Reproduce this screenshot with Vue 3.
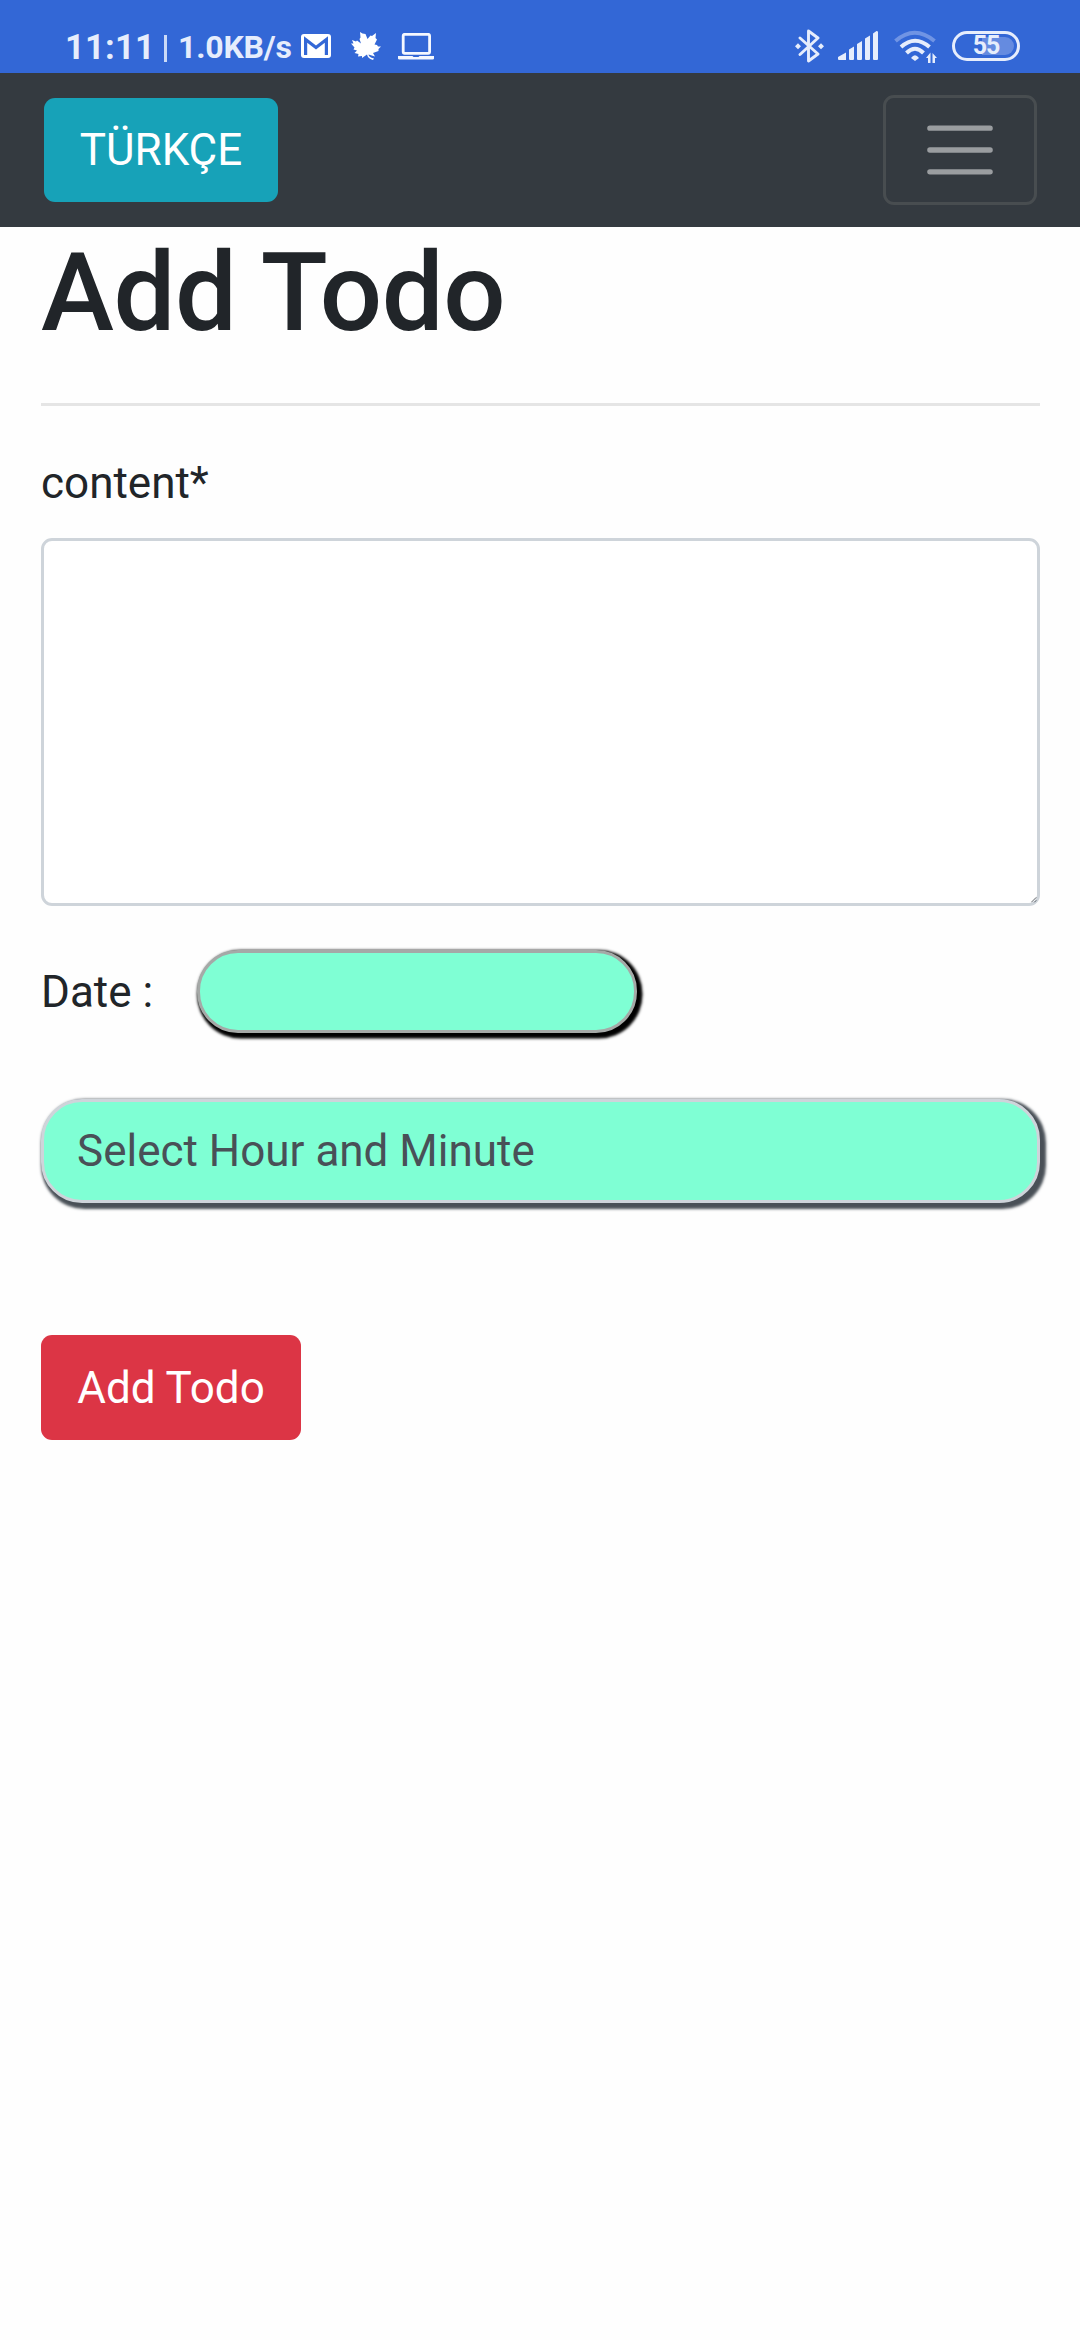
<script setup>
import { ref } from 'vue'

const content = ref('')
const date = ref('')
</script>

<template>
  <div class="screen">
    <header class="status">
      <div class="status-left">
        <span class="clock">11:11</span>
        <span class="divider"></span>
        <span class="speed">1.0KB/s</span>
        <svg class="mail" width="30" height="24" viewBox="0 0 30 24">
          <rect width="30" height="24" rx="3" fill="#fff" />
          <path d="M4.600 21V5.500L15 13.500L25.400 5.500V21" fill="none" stroke="#3367d6" stroke-width="3.200" />
        </svg>
        <svg class="leaf" width="30" height="28" viewBox="0 0 30 28">
          <path fill="#fff" d="M9 0L11.500 1.500L14.500 2L16.500 7L19.500 3.500L21 4L25 1L24.500 6L26 7.500L23.500 12.500L26 13L27 14.500L30 14.500L27.500 17L27.500 19L22 21L24 24.500L17.500 22.500C17.500 24 19 25.500 23 26.500L22 28C18 27 16.500 25 16 22.500L11 26L11 24L7 24.500L7.500 22L3.500 21L6 18.500L2.500 17.500L3.500 15.500L0 11.500L2.500 11.500L1 8L5 9.500L6 8.500L10 11.500L8.500 7L9.500 5.500Z" />
        </svg>
        <svg class="laptop" width="36" height="28" viewBox="0 0 36 28">
          <rect x="5.200" y="1.300" width="26.400" height="19" rx="1.500" fill="none" stroke="#f5f8ff" stroke-width="2.800" />
          <path d="M0 23H14.500L15.500 24H20.500L21.500 23H36V25.500Q36 26.500 34.500 26.500H1.500Q0 26.500 0 25.500Z" fill="#f5f8ff" />
        </svg>
      </div>
      <div class="status-right">
        <svg class="bluetooth" width="30" height="34" viewBox="0 0 30 34">
          <path d="M5 9L23 25L13.500 32V2L23 9L5 25.500" fill="none" stroke="#e6edfc" stroke-width="2.900" stroke-linejoin="round" stroke-linecap="round" />
          <path d="M3 14.300L6 17.300L3 20.300L0 17.300ZM26 14.300L29 17.300L26 20.300L23 17.300Z" fill="#e6edfc" />
        </svg>
        <svg class="signal" width="40" height="30" viewBox="0 0 40 30">
          <path fill="#e6edfc" d="M0 26L8 21.500V29H1Q0 29 0 28ZM11 18.500L16 15.500V28Q16 29 15 29H12Q11 29 11 28ZM19 13L24 10V28Q24 29 23 29H20Q19 29 19 28ZM27 7.500L32 4.500V28Q32 29 31 29H28Q27 29 27 28ZM35 2.500L38.500 0Q40 0 40 1V28Q40 29 39 29H36Q35 29 35 28Z" />
        </svg>
        <svg class="wifi" width="43" height="34" viewBox="0 0 43 34">
          <g fill="none" stroke="#e6edfc" stroke-width="4">
            <path d="M1.500 11Q20.500-5.500 40.500 11" stroke="#7094e4" />
            <path d="M7 17Q21 4.500 35.500 17" />
            <path d="M12.500 23Q21 14.500 29.500 23" />
          </g>
          <path d="M17 28Q21 22.500 25 28L21 31Z" fill="#e6edfc" />
          <path d="M32 28L36.500 22.500V33H34V28ZM38.500 23L43 28H41V33H38.500Z" fill="#e6edfc" />
        </svg>
        <div class="battery"><span class="charge"></span><b>55</b></div>
      </div>
    </header>

    <nav class="navbar">
      <button class="btn lang">TÜRKÇE</button>
      <button class="toggler" aria-label="Menu">
        <svg width="82" height="82" viewBox="0 0 30 30">
          <path d="M4 7h22M4 15h22M4 23h22" stroke="rgba(255,255,255,.5)" stroke-width="2" stroke-linecap="round" />
        </svg>
      </button>
    </nav>

    <main>
      <h1>Add Todo</h1>
      <hr />
      <label class="content-label" for="content">content*</label>
      <div class="area">
        <textarea id="content" v-model="content"></textarea>
        <svg class="grip" width="6" height="6" viewBox="0 0 6 6">
          <path d="M0.300 5.300L5.300 0.300M3.300 5.300L5.300 3.300" stroke="#4c5057" stroke-width="0.900" />
        </svg>
      </div>
      <div class="date-row">
        <label for="date">Date :</label>
        <input id="date" v-model="date" type="text" />
      </div>
      <div class="time">Select Hour and Minute</div>
      <button class="btn submit">Add Todo</button>
    </main>
  </div>
</template>

<style>
body {
  margin: 0;
  background: #fefefe;
}
</style>

<style scoped>
.screen {
  min-height: 2340px;
  background: #fefefe;
  color: #212529;
  font: 44px/66px Roboto, sans-serif;
}
.screen *,
.screen {
  box-sizing: border-box;
}
svg {
  display: block;
  flex: none;
}
.status {
  height: 73px;
  background: #3367d6;
  color: #e6edfc;
  display: flex;
  justify-content: space-between;
  align-items: flex-start;
  padding: 29px 60px 0 66px;
}
.status-left,
.status-right {
  display: flex;
  align-items: flex-start;
}
.clock,
.speed {
  font-weight: 700;
  line-height: 36px;
  white-space: nowrap;
}
.clock {
  width: 98px;
  font-size: 34.500px;
  letter-spacing: 0.200px;
  margin-left: -1px;
}
.divider {
  width: 3px;
  height: 27px;
  margin: 6px 0 0 1px;
  background: #cbdaf7;
}
.speed {
  width: 123px;
  margin-left: 11px;
  font-size: 32px;
  letter-spacing: -0.200px;
}
.mail {
  margin-top: 5px;
}
.leaf {
  margin: 3px 0 0 20px;
}
.laptop {
  margin: 4px 0 0 17px;
}
.signal {
  margin: 2px 0 0 13px;
}
.wifi {
  margin: 1px 0 0 16px;
}
.battery {
  position: relative;
  width: 68px;
  height: 30px;
  margin: 2px 0 0 15px;
  border: 3px solid #e6edfc;
  border-radius: 15px;
  display: flex;
  align-items: center;
  justify-content: center;
  font-size: 25px;
  line-height: 24px;
}
.battery b {
  position: relative;
  letter-spacing: -1.200px;
}
.charge {
  position: absolute;
  top: 3px;
  right: 3px;
  width: 32px;
  height: 18px;
  border-radius: 0 9px 9px 0;
  background: #658be0;
}
.navbar {
  height: 154px;
  padding: 0 43px 0 44px;
  background: #343a40;
  display: flex;
  align-items: center;
  justify-content: space-between;
}
.btn {
  display: block;
  border: 0;
  border-radius: 11px;
  color: #fff;
  font: 44px/66px Roboto, sans-serif;
  white-space: nowrap;
  padding: 0;
}
.lang {
  width: 234px;
  height: 104px;
  background: #17a2b8;
}
.toggler {
  width: 154px;
  height: 110px;
  padding: 0 0 1px;
  background: transparent;
  border: 3px solid #484d50;
  border-radius: 11px;
  display: flex;
  align-items: center;
  justify-content: center;
}
main {
  display: flex;
  flex-direction: column;
  align-items: flex-start;
  padding: 0 40px 0 41px;
}
h1 {
  margin: 0;
  font-size: 110px;
  line-height: 132px;
  font-weight: 500;
  letter-spacing: -0.500px;
}
hr {
  width: 100%;
  height: 3px;
  margin: 44px 0;
  border: 0;
  background: #e5e5e5;
}
.content-label {
  height: 88px;
}
.area {
  position: relative;
  width: 100%;
  height: 368px;
}
textarea {
  display: block;
  width: 100%;
  height: 100%;
  padding: 16px 33px;
  border: 3px solid #ced4da;
  border-radius: 11px;
  background: #fff;
  font: inherit;
  resize: none;
  outline: none;
}
.grip {
  position: absolute;
  right: 3px;
  bottom: 3px;
}
.date-row {
  display: flex;
  align-items: center;
  margin-top: 44px;
}
.date-row label {
  width: 156px;
}
.date-row input {
  width: 440px;
  height: 83px;
  padding: 0 33px;
  border: 3px solid #a5a9a7;
  border-radius: 41px;
  background: #7fffd4;
  box-shadow: 2.750px 2.750px 2.750px 2.750px #000;
  font: inherit;
  outline: none;
}
.time {
  width: 100%;
  height: 104px;
  margin-top: 66px;
  padding: 16px 33px;
  border: 3px solid #ced4da;
  border-radius: 41px;
  background: #7fffd4;
  box-shadow: 2.750px 2.750px 2.750px 2.750px #495057;
  color: #495057;
}
.submit {
  width: 260px;
  height: 105px;
  margin-top: 132px;
  background: #dc3545;
}
</style>
